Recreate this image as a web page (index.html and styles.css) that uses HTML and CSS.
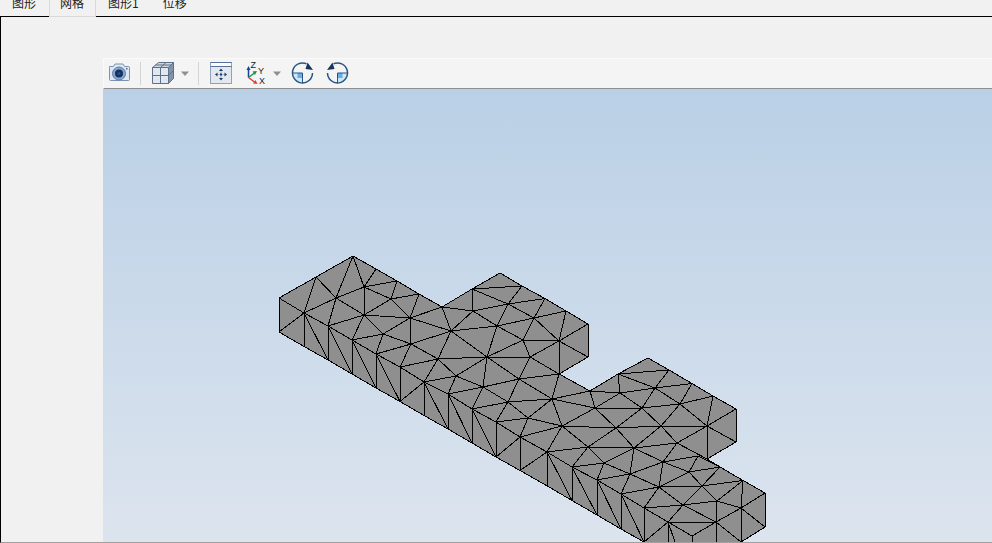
FILE: index.html
```html
<!DOCTYPE html>
<html lang="zh">
<head>
<meta charset="utf-8">
<title>网格</title>
<link rel="stylesheet" href="styles.css">
</head>
<body>
<div class="tabs">
  <div class="tab">图形</div>
  <div class="tab active">网格</div>
  <div class="tab">图形1</div>
  <div class="tab">位移</div>
</div>
<div class="panel">
  <div class="view">
    <div class="toolbar">
      <svg class="ic cam" width="23" height="21" viewBox="0 0 23 21">
        <path d="M1.500 3.500h4l1.500-2.500h8l1.500 2.500h4a1 1 0 0 1 1 1v12a1 1 0 0 1-1 1h-18a1 1 0 0 1-1-1v-12a1 1 0 0 1 1-1z" fill="#dfe8f3" stroke="#7c93b0"/>
        <circle cx="11" cy="10.500" r="6.500" fill="#84a6cf" stroke="#5d7da6"/>
        <circle cx="11" cy="10.500" r="4" fill="#15305f"/>
        <circle cx="11" cy="10.500" r="1.500" fill="#2d4f85"/>
        <rect x="18" y="5" width="1.500" height="1.500" fill="#4e6788"/>
      </svg>
      <span class="sep"></span>
      <svg class="ic cube" width="24" height="23" viewBox="0 0 24 23">
        <path d="M1.500 5.500h16v16h-16z" fill="#e1e7f0" stroke="#5f7089"/>
        <path d="M1.500 5.500l6-5h15l-5 5z" fill="#cdd6e3" stroke="#5f7089"/>
        <path d="M17.500 5.500l5-5v16l-5 5z" fill="#8294ad" stroke="#5f7089"/>
        <path d="M9.500 5.500v16M1.500 13.500h16M4.500 3h15.500M15 0.500l-5.500 5M17.500 13.500l5-5" fill="none" stroke="#5f7089"/>
      </svg>
      <svg class="caret first" width="8" height="5" viewBox="0 0 8 5"><path d="M0 0.500h8l-4 4.500z" fill="#8f8f8f"/></svg>
      <span class="sep second"></span>
      <svg class="ic fit" width="23" height="23" viewBox="0 0 23 23">
        <rect x="0.500" y="0.500" width="21" height="21" fill="#e3e8ef" stroke="#8fa2ba"/>
        <rect x="1" y="1" width="20" height="3.500" fill="#fbfcfe"/>
        <path d="M0.500 0.500h21M0.500 4.500h21" stroke="#55709a"/>
        <path d="M11 8.500v8M7 12.500h8" stroke="#a9b8cb"/>
        <path d="M11 6.500l-2 2.500h4zM11 18.500l-2-2.500h4zM5 12.500l2.500-2v4zM17 12.500l-2.500-2v4z" fill="#1e3a66"/>
        <rect x="10" y="11.500" width="2" height="2" fill="#1e3a66"/>
      </svg>
      <svg class="ic axes" width="21" height="23" viewBox="0 0 21 23">
        <path d="M2.500 15.500V7" stroke="#1d3f9e" stroke-width="1.500" fill="none"/>
        <path d="M2.500 4l-2 4h4z" fill="#1d3f9e"/>
        <path d="M2.500 15.500l6-4.500" stroke="#17954a" stroke-width="1.500" fill="none"/>
        <path d="M11 9l-4.500 0.500 2.500 3.500z" fill="#17954a"/>
        <path d="M2.500 15.500l6 4.500" stroke="#e13a3a" stroke-width="1.500" fill="none"/>
        <path d="M11.500 22l-4.500-0.500 2.500-3.500z" fill="#e13a3a"/>
        <text x="4.500" y="6" class="axl">Z</text>
        <text x="12" y="12" class="axl">Y</text>
        <text x="13" y="22" class="axl">X</text>
      </svg>
      <svg class="caret next" width="8" height="5" viewBox="0 0 8 5"><path d="M0 0.500h8l-4 4.500z" fill="#8f8f8f"/></svg>
      <svg class="ic rot" width="24" height="23" viewBox="0 0 24 23">
        <path d="M11.500 11V21A10 10 0 0 1 1.500 11Z" fill="#cde7f9"/>
        <rect x="6.500" y="11" width="5" height="5" fill="#65b0ea"/>
        <path d="M11.500 21V11H1.500" fill="none" stroke="#2a5580"/>
        <path d="M21.500 11A10 10 0 1 1 15.500 1.800" fill="none" stroke="#2a5580" stroke-width="1.500"/>
        <path d="M16.500 0.500L22 8L14.500 7Z" fill="#17345f"/>
      </svg>
      <svg class="ic rot ccw" width="24" height="23" viewBox="0 0 24 23">
        <path d="M12.500 11V21A10 10 0 0 0 22.500 11Z" fill="#cde7f9"/>
        <rect x="12.500" y="11" width="5" height="5" fill="#65b0ea"/>
        <path d="M12.500 21V11H22.500" fill="none" stroke="#2a5580"/>
        <path d="M2.500 11A10 10 0 1 0 8.500 1.800" fill="none" stroke="#2a5580" stroke-width="1.500"/>
        <path d="M7.500 0.500L2 8L9.500 7Z" fill="#17345f"/>
      </svg>
    </div>
    <div class="scene">
      <svg class="mesh" width="889" height="453" viewBox="103 89 889 453">
        <path class="solid" d="M353 256L376 269L397 281L419 294L442 307L472 289L500 273L522 286L545 298.500L566 311L588 324V357L559 374L590 391L618 374L648 358L669 370L692 383.500L713 396L736 409V442L707 459L720 467L743 480.500L765 493V527L741 542H644L621 529L597 515L572 500.500L546.500 485.500L520 470.500L496 457L472 443L448 429L424 415.500L400 401.500L376 388L352 374L328 360L304 346.500L279 332V298Z"/>
        <path class="edges" d="M353 256L376 269L397 281L419 294L442 307L472 289L500 273L522 286L545 298.500L566 311L588 324V357L559 374L590 391L618 374L648 358L669 370L692 383.500L713 396L736 409V442L707 459L720 467L743 480.500L765 493V527L741 542H644L621 529L597 515L572 500.500L546.500 485.500L520 470.500L496 457L472 443L448 429L424 415.500L400 401.500L376 388L352 374L328 360L304 346.500L279 332V298Z
        M279 298L304 313M279 332L304 313M316 277L304 313M316 277L336 298M353 256L336 298M353 256L364 287M376 269L364 287M364 287L397 281M397 281L391 299M364 287L391 299M364 287L336 298M336 298L304 313M336 298L364 315M364 287L364 315M391 299L364 315M391 299L419 294M391 299L410 318M419 294L410 318M410 318L442 307M364 315L410 318M364 315L328 326M336 298L328 326M304 313L328 326M364 315L352 340M364 315L383 334M383 334L352 340M383 334L410 318M383 334L411 344M410 318L411 344M383 334L376 354M352 340L376 354M328 326L352 340M376 354L411 344M376 354L400 367M411 344L400 367M411 344L438 359M400 367L438 359M400 367L424 382M438 359L424 382
        M304 313V346.500M304 313L328 360M328 326V360M328 326L352 374M352 340V374M352 340L376 388M376 354V388M376 354L400 401.500M400 367V401.500M424 382L400 401.500M424 382V415.500M424 382L448 429M448 394V429M448 394L472 443M472 409V443M472 409L496 457M496 422V457M496 422L520 437M520 437L496 457M520 437V470.500M520 437L547 452M547 452L520 470.500M547 452V485.500M547 452L572 500.500M572 467V500.500M572 467L597 515M597 480V515M597 480L621 529M597 480L621 494M621 494V529M621 494L644 542M644 508V542
        M472 289L473 311M472 289L522 286M472 289L508 304M522 286L508 304M473 311L508 304M442 307L473 311M545 298.500L508 304M545 298.500L534 318M508 304L534 318M566 311L534 318M566 311L559 341M588 324L559 341M588 357L559 341M534 318L559 341M534 318L523 340M523 340L559 341M473 311L497 326M508 304L497 326M497 326L534 318M497 326L523 340M442 307L451 331M410 318L451 331M411 344L451 331M451 331L438 359M451 331L473 311M451 331L497 326M451 331L487 357M497 326L487 357M523 340L487 357M523 340L530 357M487 357L530 357M530 357L559 341M530 357L559 374M559 341V374M530 357L519 379M487 357L519 379M487 357L483 387M438 359L487 357M438 359L456 376M456 376L487 357M456 376L424 382M456 376L448 394M456 376L483 387M483 387L519 379M519 379L559 374M483 387L448 394M424 382L448 394M448 394L472 409M483 387L472 409M483 387L508 402M519 379L508 402M508 402L472 409M519 379L552 399M559 374L552 399M508 402L552 399M552 399L590 391M552 399L595 408M590 391L595 408M508 402L528 418M508 402L496 422M472 409L496 422M528 418L496 422M528 418L552 399M528 418L562 426M552 399L562 426M562 426L520 437M528 418L520 437M562 426L547 452M562 426L595 408M562 426L616 428M562 426L588 447M547 452L588 447M547 452L572 467M588 447L572 467
        M618 374L669 370M618 374L655 388M669 370L655 388M618 374L620 393M590 391L620 393M620 393L655 388M692 383.500L655 388M655 388L680 404M692 383.500L680 404M713 396L680 404M713 396L707 426M736 409L707 426M736 442L707 426M680 404L707 426M655 388L642 408M620 393L642 408M642 408L680 404M595 408L620 393M595 408L642 408M642 408L616 428M642 408L661 426M680 404L661 426M661 426L707 426M661 426L616 428M616 428L595 408M616 428L588 447M616 428L634 448M661 426L677 443M661 426L634 448M677 443L707 426M677 443L634 448M677 443L707 459M707 426V459M677 443L663 462M634 448L663 462M634 448L630 474M634 448L604 463M588 447L604 463M588 447L634 448M572 467L604 463M572 467L597 480M604 463L630 474M604 463L597 480M630 474L597 480M630 474L621 494M630 474L659 487M630 474L663 462M663 462L659 487M663 462L698 456M663 462L689 472M698 456L689 472M698 456L720 467M689 472L720 467M689 472L702 486M659 487L689 472M720 467L702 486M659 487L702 486M743 480.500L702 486M743 480.500L741 508M765 493L741 508M765 527L741 508M717 501L741 508M743 480.500L717 501M702 486L717 501M702 486L683 505M659 487L683 505M683 505L717 501M644 508L683 505M659 487L621 494M621 494L644 508M659 487L644 508M644 508L668 522M668 522L644 542M668 522L683 505M683 505L716 522M668 522L716 522M668 522V542M668 522L675 542M668 522L692 536M692 536L716 522M692 536V542M716 522V542M717 501L716 522M716 522L741 508M716 522L741 542M741 508V542"/>
      </svg>
    </div>
  </div>
</div>
</body>
</html>
```

FILE: styles.css
```css
* { box-sizing: border-box; }
html, body { margin: 0; height: 100%; overflow: hidden; background: #f1f1f1; }
body { display: flex; flex-direction: column; height: 543px; font-family: "Noto Sans CJK SC", "Liberation Sans", sans-serif; }

.tabs { display: flex; flex: none; height: 17px; margin-bottom: -1px; position: relative; z-index: 1; overflow: hidden; font-size: 12px; line-height: 12px; color: #222; }
.tab { padding: 0 12px; margin-top: -3px; height: 19px; }
.tab.active { margin-left: 1px; height: 20px; padding: 0 11px 0 10px; background: #f1f1f1; border: 1px solid #d9d9d9; border-top: 0; }

.panel { flex: 1; min-height: 0; background: #f1f1f1; border-top: 1px solid #000; border-left: 1px solid #000; border-bottom: 1px solid #a0a0a0; padding: 41px 0 0 102px; }
.view { height: 100%; display: flex; flex-direction: column; }

.toolbar { height: 31px; flex: none; display: flex; align-items: center; background: #f4f4f4; border-top: 1px solid #fbfbfb; border-left: 1px solid #fbfbfb; border-bottom: 1px solid #8e8e8e; }
.ic { flex: none; display: block; }
.cam { margin-left: 4px; }
.sep { width: 1px; height: 23px; background: #d4d4d4; margin-left: 9px; }
.cube { margin-left: 10px; }
.caret { flex: none; display: block; }
.caret.first { margin-left: 6px; }
.sep.second { margin-left: 9px; }
.fit { margin-left: 11px; }
.axes { margin-left: 13px; }
.caret.next { margin-left: 6px; }
.rot { margin-left: 10px; }
.axl { font: 400 9px "Liberation Sans", sans-serif; fill: #222; }

.scene { flex: 1; min-height: 0; background: linear-gradient(#bad0e6, #dce4ee); }
.mesh { display: block; }
.solid { fill: #8f8f8f; }
.edges { fill: none; stroke: #000; stroke-width: 1; shape-rendering: crispEdges; }
```
